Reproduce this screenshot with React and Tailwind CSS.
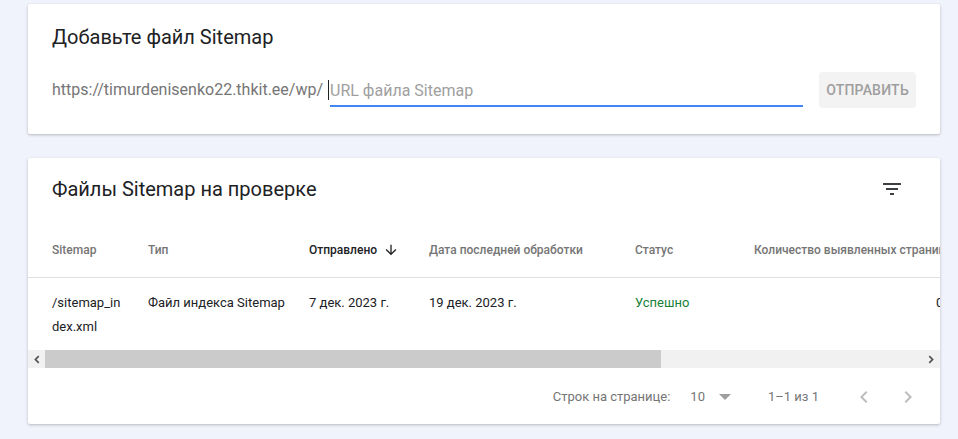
import React from "react";

// Колонки таблицы файлов Sitemap
const columns = [
  { key: "sitemap", label: "Sitemap", w: "w-[96px]" },
  { key: "type", label: "Тип", w: "w-[161px]" },
  { key: "sent", label: "Отправлено", w: "w-[120px]", sorted: true },
  { key: "processed", label: "Дата последней обработки", w: "w-[206px]" },
  { key: "status", label: "Статус", w: "w-[119px]" },
  { key: "count", label: "Количество выявленных страниц", w: "w-[260px]" },
];

function FilterIcon() {
  return (
    <svg width="24" height="24" viewBox="0 0 24 24" fill="#3c4043">
      <path d="M10 18h4v-2h-4v2zM3 6v2h18V6H3zm3 7h12v-2H6v2z" />
    </svg>
  );
}

function ChevronLeft({ color = "#bdbdbd" }) {
  return (
    <svg width="24" height="24" viewBox="0 0 24 24" fill={color}>
      <path d="M15.41 7.41 14 6l-6 6 6 6 1.41-1.41L10.83 12z" />
    </svg>
  );
}

function ChevronRight({ color = "#bdbdbd" }) {
  return (
    <svg width="24" height="24" viewBox="0 0 24 24" fill={color}>
      <path d="M10 6 8.59 7.41 13.17 12l-4.58 4.59L10 18l6-6z" />
    </svg>
  );
}

export default function App() {
  return (
    <div
      className="min-h-[439px] w-[958px] bg-[#f0f3fb] pt-[4px] pl-[28px]"
      style={{ fontFamily: "Roboto, 'Noto Sans', sans-serif" }}
    >
      {/* Добавление файла */}
      <div className="w-[912px] h-[130px] bg-white rounded-[2px] shadow-[0_1px_3px_rgba(0,0,0,0.25)] px-6 pt-[19px]">
        <h2 className="text-[20px] leading-[28px] text-[#202124]">Добавьте файл Sitemap</h2>
        <div className="mt-[21px] flex items-center h-[36px]">
          <span className="text-[16px] text-[#757575] whitespace-nowrap">
            https://timurdenisenko22.thkit.ee/wp/
          </span>
          <div className="ml-[5px] w-[1px] h-[20px] bg-[#202124]" />
          <div className="ml-[1px] w-[473px] h-[30px] mt-[3px] border-b-2 border-[#4285f4] flex items-center">
            <span className="text-[16px] text-[#a0a0a0]">URL файла Sitemap</span>
          </div>
          <button className="ml-auto h-[36px] w-[97px] rounded-[4px] bg-[#f3f3f3] text-[14px] font-medium text-[#9e9e9e] uppercase tracking-[0.2px]">
            Отправить
          </button>
        </div>
      </div>

      {/* Таблица */}
      <div className="mt-[24px] w-[912px] h-[266px] bg-white rounded-[2px] shadow-[0_1px_3px_rgba(0,0,0,0.25)] overflow-hidden">
        <div className="flex items-center pl-6 pr-[36px] pt-[17px]">
          <h2 className="text-[20px] leading-[28px] text-[#202124]">Файлы Sitemap на проверке</h2>
          <div className="ml-auto">
            <FilterIcon />
          </div>
        </div>

        <div className="mt-[19px] overflow-hidden">
          <div className="flex h-[56px] items-center pl-6 border-b border-[#e0e0e0] whitespace-nowrap">
            {columns.map((c) => (
              <div key={c.key} className={`${c.w} shrink-0 flex items-center text-[12px] font-medium ${c.sorted ? "text-[#202124]" : "text-[#757575]"}`}>
                {c.label}
                {c.sorted && (
                  <svg className="ml-[6px]" width="16" height="16" viewBox="0 0 24 24" fill="#202124">
                    <path d="M20 12l-1.41-1.41L13 16.17V4h-2v12.17l-5.58-5.59L4 12l8 8 8-8z" />
                  </svg>
                )}
              </div>
            ))}
          </div>
          <div className="flex pl-6 pt-[13px] pb-[11px] text-[13px] leading-[24px] text-[#202124] whitespace-nowrap">
            <div className="w-[96px] shrink-0">
              /sitemap_in
              <br />
              dex.xml
            </div>
            <div className="w-[161px] shrink-0">Файл индекса Sitemap</div>
            <div className="w-[120px] shrink-0">7 дек. 2023 г.</div>
            <div className="w-[206px] shrink-0">19 дек. 2023 г.</div>
            <div className="w-[119px] shrink-0 text-[#188038]">Успешно</div>
            <div className="w-[260px] shrink-0 pl-[182px]">0</div>
          </div>
        </div>

        {/* Горизонтальная прокрутка */}
        <div className="flex h-[18px] bg-[#f1f1f1]">
          <div className="w-[17px] flex items-center justify-center">
            <svg width="9" height="9" viewBox="0 0 8 8" fill="#505050">
              <path d="M5.5 0.5 6.5 1.5 4 4l2.5 2.5-1 1L2 4z" />
            </svg>
          </div>
          <div className="w-[616px] bg-[#cbcbcb]" />
          <div className="flex-1" />
          <div className="w-[17px] flex items-center justify-center">
            <svg width="9" height="9" viewBox="0 0 8 8" fill="#505050">
              <path d="M2.5 0.5 1.5 1.5 4 4 1.5 6.5l1 1L6 4z" />
            </svg>
          </div>
        </div>

        {/* Пагинация */}
        <div className="flex h-[56px] pt-[2px] items-center justify-end pr-[20px] text-[13px] text-[#757575] whitespace-nowrap">
          <span>Строк на странице:</span>
          <span className="ml-[20px]">10</span>
          <svg className="ml-[13px]" width="14" height="8" viewBox="0 0 14 8" fill="#9e9e9e">
            <path d="M1 1h12L7 7z" />
          </svg>
          <span className="ml-[36px]">1–1 из 1</span>
          <div className="ml-[33px]">
            <ChevronLeft />
          </div>
          <div className="ml-[20px]">
            <ChevronRight />
          </div>
        </div>
      </div>
    </div>
  );
}
